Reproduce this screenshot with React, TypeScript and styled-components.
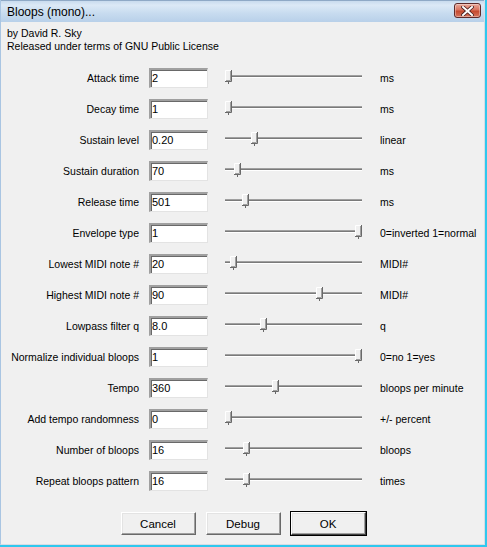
import React from 'react'
import styled, { createGlobalStyle } from 'styled-components'

type Param = {
  label: string
  value: string
  pos: number // 0..1 thumb position
  unit: string
}

const params: Param[] = [
  { label: 'Attack time', value: '2', pos: 0, unit: 'ms' },
  { label: 'Decay time', value: '1', pos: 0, unit: 'ms' },
  { label: 'Sustain level', value: '0.20', pos: 0.2, unit: 'linear' },
  { label: 'Sustain duration', value: '70', pos: 0.07, unit: 'ms' },
  { label: 'Release time', value: '501', pos: 0.13, unit: 'ms' },
  { label: 'Envelope type', value: '1', pos: 1, unit: '0=inverted 1=normal' },
  { label: 'Lowest MIDI note #', value: '20', pos: 0.04, unit: 'MIDI#' },
  { label: 'Highest MIDI note #', value: '90', pos: 0.7, unit: 'MIDI#' },
  { label: 'Lowpass filter q', value: '8.0', pos: 0.27, unit: 'q' },
  { label: 'Normalize individual bloops', value: '1', pos: 1, unit: '0=no 1=yes' },
  { label: 'Tempo', value: '360', pos: 0.36, unit: 'bloops per minute' },
  { label: 'Add tempo randomness', value: '0', pos: 0, unit: '+/- percent' },
  { label: 'Number of bloops', value: '16', pos: 0.14, unit: 'bloops' },
  { label: 'Repeat bloops pattern', value: '16', pos: 0.14, unit: 'times' },
]

const Global = createGlobalStyle`
  html, body { margin: 0; padding: 0; background: #2ec8ee; }
  body { width: 487px; height: 547px; overflow: hidden; }
`

const Window = styled.div`
  width: 485px;
  height: 545px;
  box-sizing: border-box;
  display: flex;
  flex-direction: column;
  background: #f0f0f0;
  border-left: 1px solid #a9c5e2;
  border-right: 1px solid #d6dde5;
  border-bottom: 1px solid #d6dde5;
  font-family: 'Liberation Sans', Arial, sans-serif;
  font-size: 10.5px;
  color: #000;
`

const TitleBar = styled.div`
  height: 22px;
  flex: none;
  display: flex;
  align-items: center;
  justify-content: space-between;
  padding: 0 3px 0 6px;
  box-sizing: border-box;
  border-top: 1px solid #8fa9c6;
  background: linear-gradient(#c9dbee 0%, #dce9f6 20%, #c7dbef 60%, #b8d0e9 100%);
`

const Title = styled.span`
  font-size: 12px;
  color: #000;
`

const CloseButton = styled.div`
  width: 27px;
  height: 15px;
  box-sizing: border-box;
  border: 1px solid #5e2a2a;
  border-radius: 3px;
  display: grid;
  place-items: center;
  background: linear-gradient(#e9a99a 0%, #d9735f 45%, #c54a30 55%, #d5735c 100%);
  box-shadow: inset 0 0 0 1px rgba(255, 255, 255, 0.35);
  margin-top: -2px;
`

const Client = styled.div`
  flex: 1;
  display: flex;
  flex-direction: column;
  padding: 5px 0 9px 0;
  box-sizing: border-box;
`

const Header = styled.div`
  padding-left: 6px;
  line-height: 13px;
`

const Grid = styled.div`
  display: grid;
  grid-template-columns: 138px 59px 144px auto;
  column-gap: 10px;
  row-gap: 11px;
  margin-top: 15px;
  align-items: center;
  & > :nth-child(4n + 3) { margin-left: 7px; }
  & > :nth-child(4n + 4) { margin-left: 8px; }
`

const Label = styled.span`
  text-align: right;
  white-space: nowrap;
`

const Field = styled.div`
  height: 20px;
  box-sizing: border-box;
  background: #fff;
  border-top: 2px solid #a0a0a0;
  border-left: 2px solid #a0a0a0;
  border-right: 1px solid #e3e3e3;
  border-bottom: 1px solid #e3e3e3;
  padding: 1px 0 0 1px;
  line-height: 15px;
  font-size: 11px;
  box-shadow: inset 1px 1px 0 #696969;
  overflow: hidden;
`

const Unit = styled.span`
  white-space: nowrap;
`

const SliderWrap = styled.div`
  position: relative;
  height: 20px;
`

const Track = styled.div`
  position: absolute;
  left: 0;
  right: 0;
  top: 7px;
  height: 3px;
  box-sizing: border-box;
  border-top: 1px solid #a0a0a0;
  border-bottom: 1px solid #ffffff;
  background: #7a7a7a;
`

const Thumb = styled.svg`
  position: absolute;
  top: 2px;
  width: 7px;
  height: 14px;
`

const Buttons = styled.div`
  margin-top: auto;
  display: flex;
  justify-content: center;
  gap: 10px;
  padding-left: 1px;
`

const Button = styled.div<{ $default?: boolean }>`
  width: 75px;
  height: 23px;
  box-sizing: border-box;
  display: grid;
  place-items: center;
  background: #f0f0f0;
  border-top: 1px solid #fff;
  border-left: 1px solid #fff;
  border-right: 1px solid #696969;
  border-bottom: 1px solid #696969;
  box-shadow: inset -1px -1px 0 #a0a0a0, inset 1px 1px 0 #e3e3e3;
  font-size: 11.5px;
  ${p => p.$default && `
    outline: 1px solid #000;
    outline-offset: 0;
    border-color: #fff #404040 #404040 #fff;
  `}
`

const Slider: React.FC<{ pos: number }> = ({ pos }) => (
  <SliderWrap>
    <Track />
    <Thumb style={{ left: `${Math.round(pos * 130)}px` }} viewBox="0 0 7 14">
      <rect x="0" y="0" width="7" height="11" fill="#f0f0f0" />
      <path d="M0.5 11V0.5H6" stroke="#ffffff" fill="none" />
      <path d="M6.5 0V11.5H0" stroke="#696969" fill="none" />
      <path d="M5.5 1V10.5H1" stroke="#a0a0a0" fill="none" />
      <rect x="3" y="12" width="1" height="2" fill="#696969" />
    </Thumb>
  </SliderWrap>
)

export default function App() {
  return (
    <>
      <Global />
      <Window>
        <TitleBar>
          <Title>Bloops (mono)...</Title>
          <CloseButton>
            <svg width="13" height="10" viewBox="0 0 13 10">
              <path d="M2 1L11 9M11 1L2 9" stroke="#4a2020" strokeWidth="3.6" strokeLinecap="square" />
              <path d="M2 1L11 9M11 1L2 9" stroke="#ffffff" strokeWidth="2" strokeLinecap="square" />
            </svg>
          </CloseButton>
        </TitleBar>
        <Client>
          <Header>
            <div>by David R. Sky</div>
            <div>Released under terms of GNU Public License</div>
          </Header>
          <Grid>
            {params.map(p => (
              <React.Fragment key={p.label}>
                <Label>{p.label}</Label>
                <Field>{p.value}</Field>
                <Slider pos={p.pos} />
                <Unit>{p.unit}</Unit>
              </React.Fragment>
            ))}
          </Grid>
          <Buttons>
            <Button>Cancel</Button>
            <Button>Debug</Button>
            <Button $default>OK</Button>
          </Buttons>
        </Client>
      </Window>
    </>
  )
}
